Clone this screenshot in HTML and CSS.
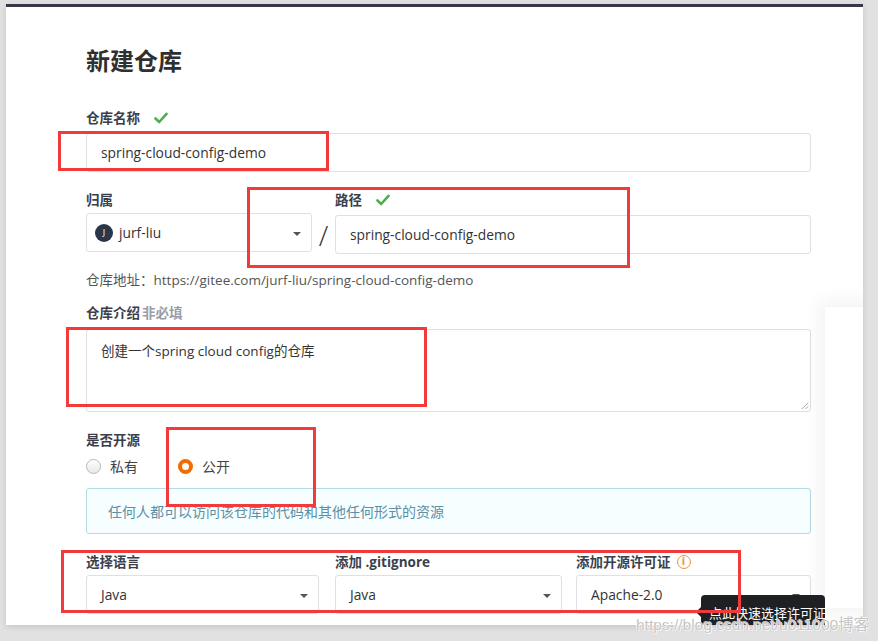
FILE: index.html
```html
<!DOCTYPE html>
<html lang="zh">
<head>
<meta charset="utf-8">
<title>新建仓库</title>
<link rel="stylesheet" href="styles.css">
</head>
<body>
<div class="panel">
  <div class="content">
    <h1 class="title">新建仓库</h1>

    <div class="label lbl-name">仓库名称 <svg class="check" viewBox="0 0 14 12"><path d="M1.5 6.5 L5.2 10 L12.5 1.8" fill="none" stroke="#4caf50" stroke-width="2.6" stroke-linecap="round" stroke-linejoin="round"/></svg></div>
    <div class="field input-name">spring-cloud-config-demo</div>

    <div class="row-owner">
      <div class="col">
        <div class="label">归属</div>
        <div class="field select owner">
          <span class="avatar">J</span><span>jurf-liu</span>
          <span class="caret"></span>
        </div>
      </div>
      <div class="slash">/</div>
      <div class="col">
        <div class="label">路径 <svg class="check" viewBox="0 0 14 12"><path d="M1.5 6.5 L5.2 10 L12.5 1.8" fill="none" stroke="#4caf50" stroke-width="2.6" stroke-linecap="round" stroke-linejoin="round"/></svg></div>
        <div class="field path">spring-cloud-config-demo</div>
      </div>
    </div>

    <div class="address">仓库地址：https://gitee.com/jurf-liu/spring-cloud-config-demo</div>

    <div class="label lbl-desc">仓库介绍 <span class="optional">非必填</span></div>
    <div class="field textarea">创建一个spring cloud config的仓库
      <svg class="resize" viewBox="0 0 10 10"><path d="M9 2 L2 9 M9 6 L6 9" stroke="#999" stroke-width="1"/></svg>
    </div>

    <div class="label lbl-open">是否开源</div>
    <div class="radios">
      <label class="radio"><span class="dot off"></span>私有</label>
      <label class="radio"><span class="dot on"></span>公开</label>
    </div>

    <div class="info">任何人都可以访问该仓库的代码和其他任何形式的资源</div>

    <div class="row-three">
      <div class="col">
        <div class="label">选择语言</div>
        <div class="field select">Java<span class="caret"></span></div>
      </div>
      <div class="col">
        <div class="label">添加 .gitignore</div>
        <div class="field select">Java<span class="caret"></span></div>
      </div>
      <div class="col">
        <div class="label">添加开源许可证 <span class="info-icon">i</span></div>
        <div class="field select">Apache-2.0<span class="caret"></span></div>
      </div>
    </div>
  </div>

  <div class="side-box"></div>
  <div class="tooltip">点此快速选择许可证</div>
</div>

<div class="mark m1"></div>
<div class="mark m2"></div>
<div class="mark m3"></div>
<div class="mark m4"></div>
<div class="mark m5"></div>

<div class="watermark">https://blog.csdn.net/u011000博客</div>
</body>
</html>
```

FILE: styles.css
```css
* { box-sizing: border-box; }
html, body { margin: 0; padding: 0; }
body {
  width: 878px;
  height: 641px;
  overflow: hidden;
  background: #e1e1e1;
  font-family: "Open Sans", "Noto Sans CJK SC", sans-serif;
  color: #333;
  position: relative;
}
.panel {
  position: relative;
  margin: 4px 0 0 6px;
  width: 857px;
  height: 621px;
  background: #fff;
  border-top: 3px solid #363847;
  box-shadow: 0 2px 6px rgba(0,0,0,0.12);
  overflow: hidden;
}
.content {
  padding: 0 52px 0 80px;
}
.title {
  margin: 39px 0 0;
  font-size: 24px;
  line-height: 28px;
  font-weight: 700;
  color: #2f2f2f;
  font-family: "Noto Sans CJK SC", sans-serif;
}
.label {
  font-size: 13.5px;
  line-height: 18px;
  font-weight: 700;
  color: #3b3f4c;
  display: flex;
  align-items: center;
  gap: 6px;
}
.check { width: 14px; height: 12px; margin-left: 8px; }
.optional { color: #9a9ca5; font-weight: 700; margin-left: -2px; }
.lbl-name { margin-top: 35px; }
.field {
  border: 1px solid #dfe0e6;
  border-radius: 3px;
  height: 39px;
  font-size: 13.8px;
  color: #333;
  display: flex;
  align-items: center;
  padding: 0 14px;
  position: relative;
  background: #fff;
}
.input-name { margin-top: 6px; }
.row-owner {
  margin-top: 19px;
  display: grid;
  grid-template-columns: 226px 23px 1fr;
}
.row-owner .field { margin-top: 4px; }
.row-owner .path { margin-top: 6px; }
.slash {
  font-size: 28px;
  font-weight: 300;
  color: #333;
  align-self: end;
  text-align: center;
  line-height: 34px;
  padding-bottom: 2px;
}
.owner { padding-left: 8px; gap: 6px; }
.avatar {
  width: 18px; height: 18px;
  border-radius: 50%;
  background: #2b3648;
  color: #fff;
  font-size: 9px;
  display: inline-flex;
  align-items: center;
  justify-content: center;
}
.caret {
  position: absolute;
  right: 10px;
  top: 18px;
  width: 0; height: 0;
  border-left: 4px solid transparent;
  border-right: 4px solid transparent;
  border-top: 4px solid #555;
}
.address {
  margin-top: 17px;
  font-size: 13.5px;
  line-height: 18px;
  color: #555;
}
.lbl-desc { margin-top: 15px; gap: 4px; }
.textarea {
  margin-top: 7px;
  height: 83px;
  align-items: flex-start;
  padding-top: 10px;
  font-size: 13.5px;
}
.resize { position: absolute; right: 1px; bottom: 1px; width: 9px; height: 9px; }
.lbl-open { margin-top: 19px; }
.radios {
  margin-top: 7px;
  display: flex;
  height: 20px;
  align-items: center;
  font-size: 14px;
  color: #444;
}
.radio { display: flex; align-items: center; gap: 9px; width: 92px; }
.dot {
  width: 15px; height: 15px; border-radius: 50%;
  display: inline-block;
}
.dot.off {
  border: 1px solid #b8b8b8;
  background: linear-gradient(#fff, #e8e8e8);
}
.dot.on {
  border: 4px solid #f56b00;
  background: #fff;
}
.info {
  margin-top: 12px;
  height: 46px;
  background: #f6feff;
  border: 1px solid #b4dbe6;
  border-radius: 3px;
  display: flex;
  align-items: center;
  padding-left: 21px;
  font-size: 14px;
  color: #5b90a8;
}
.row-three {
  margin-top: 19px;
  display: grid;
  grid-template-columns: 233px 227px 1fr;
  gap: 16px;
}
.row-three .col:last-child { margin-left: -2px; }
.row-three .field { margin-top: 4px; }
.info-icon {
  width: 14px; height: 14px; border-radius: 50%;
  border: 1.5px solid #f0923f;
  color: #f0923f;
  font-size: 10px;
  font-weight: 700;
  display: inline-flex; align-items: center; justify-content: center;
  margin-left: 0;
  font-family: "DejaVu Sans", sans-serif;
}
.side-box {
  position: absolute;
  left: 819px;
  top: 300px;
  width: 60px;
  height: 301px;
  background: #fff;
  box-shadow: 0 0 18px 6px rgba(0,0,0,0.05);
}
.tooltip {
  position: absolute;
  left: 695px;
  top: 588px;
  width: 124px;
  height: 34px;
  background: #1f2023;
  border-radius: 4px;
  color: #fff;
  font-size: 13px;
  padding: 8px 0 0 8px;
  white-space: nowrap;
}
.tooltip::before {
  content: "";
  position: absolute;
  left: -5px;
  top: 12px;
  border-top: 5px solid transparent;
  border-bottom: 5px solid transparent;
  border-right: 5px solid #1f2023;
}
.mark {
  position: absolute;
  border: 3px solid #f23a3a;
}
.m1 { left: 58px; top: 131px; width: 271px; height: 40px; }
.m2 { left: 247px; top: 187px; width: 383px; height: 81px; }
.m3 { left: 66px; top: 327px; width: 361px; height: 80px; }
.m4 { left: 166px; top: 427px; width: 150px; height: 80px; }
.m5 { left: 61px; top: 550px; width: 680px; height: 63px; }
.watermark {
  position: absolute;
  left: 636px;
  top: 612px;
  font-family: "Liberation Sans", "Noto Sans CJK SC", sans-serif;
  font-size: 15.5px;
  color: #c6c6c6;
  text-shadow: 0 0 1px #fff, 0 0 1px #fff, 1px 1px 0 rgba(255,255,255,0.7), -1px -1px 0 rgba(255,255,255,0.7);
  white-space: nowrap;
}
```
